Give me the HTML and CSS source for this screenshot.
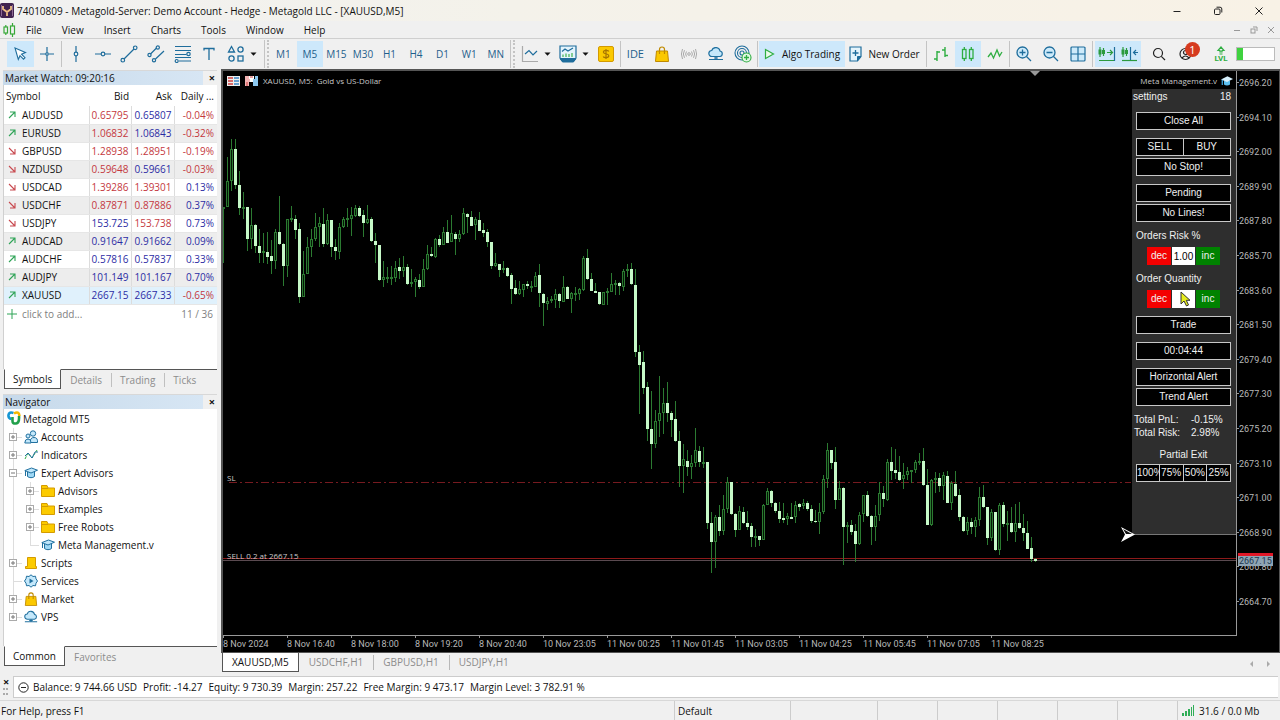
FILE: index.html
```html
<!DOCTYPE html>
<html lang="en">
<head>
<meta charset="utf-8">
<title>74010809 - Metagold-Server: Demo Account - Hedge - Metagold LLC - [XAUUSD,M5]</title>
<link rel="stylesheet" href="styles.css">
</head>
<body>
<svg class="sprite" aria-hidden="true">
  <symbol id="i-cap" viewBox="0 0 14 12"><path d="M3.5 5v4.5c2 1.6 5 1.6 7 0V5" fill="#9fd8f5" stroke="#20709f"/><path d="M.8 3.6 7.5 1l6 2.2L7 6z" fill="#bfe6fb" stroke="#20709f"/><path d="M1.5 4v5" stroke="#20709f"/></symbol>
  <symbol id="i-bag" viewBox="0 0 14 16"><path d="M1.5 5h11l1 10.5H.5z" fill="#fbc800" stroke="#c08a00"/><path d="M4.5 8V3.5a2.5 2.5 0 0 1 5 0V8" fill="none" stroke="#c08a00" stroke-width="1.2"/></symbol>
  <symbol id="i-cloud" viewBox="0 0 16 14"><path d="M4 9.5a3 3 0 0 1-.3-6A4.3 4.3 0 0 1 12 4a2.8 2.8 0 0 1 0 5.5z" fill="#c4e8fb" stroke="#20709f" stroke-width="1.2"/><path d="M8 9.5v3M1 12.5h14M6 11h4" stroke="#20709f" stroke-width="1.2" fill="none"/></symbol>
  <symbol id="i-folder" viewBox="0 0 14 12"><path d="M.5 11.5V.5H6l1 2.5h6.5v8.5z" fill="#fccb00" stroke="#d49b00"/><path d="M1 3.5h6" stroke="#d49b00"/></symbol>
  <symbol id="i-up" viewBox="0 0 8 8"><path d="M1 7 6.5 1.5M2 1h5v5" fill="none" stroke="#2fa457" stroke-width="1.1"/></symbol>
  <symbol id="i-down" viewBox="0 0 8 8"><path d="M1 1l5.5 5.5M7 2v5H2" fill="none" stroke="#c8484e" stroke-width="1.1"/></symbol>
  <symbol id="i-plus" viewBox="0 0 9 9"><rect x=".5" y=".5" width="7" height="7" fill="#fff" stroke="#aaa"/><path d="M2 4h4M4 2v4" stroke="#777"/></symbol>
  <symbol id="i-minus" viewBox="0 0 9 9"><rect x=".5" y=".5" width="7" height="7" fill="#fff" stroke="#aaa"/><path d="M2 4h4" stroke="#777"/></symbol>
  <symbol id="i-caret" viewBox="0 0 7 4"><path d="M.5.5h6L3.5 3.8z" fill="#111"/></symbol>
</svg>

<header class="titlebar">
  <svg class="applogo" width="14" height="15" viewBox="0 0 14 15"><rect width="14" height="15" rx="2" fill="#40234f"/><path d="M3 3v3l4 3 4-3V3M7 9v4" fill="none" stroke="#eebf85" stroke-width="1.8"/><path d="M1.5 2v11M12.5 2v11" stroke="#8c6a94"/></svg>
  <h1>74010809 - Metagold-Server: Demo Account - Hedge - Metagold LLC - [XAUUSD,M5]</h1>
  <div class="winbtns">
    <button aria-label="Minimize"><svg width="10" height="10"><path d="M1.5 5.5h7" stroke="#222"/></svg></button>
    <button aria-label="Restore"><svg width="10" height="10" fill="none" stroke="#222"><rect x="1.5" y="3" width="5.5" height="5.5" rx="1"/><path d="M3.5 1.2h3.5q1.8 0 1.8 1.8v3.5"/></svg></button>
    <button aria-label="Close"><svg width="10" height="10" stroke="#222"><path d="M1.5 1.5l7 7M8.5 1.5l-7 7"/></svg></button>
  </div>
</header>

<nav class="menubar">
  <svg class="menulogo" width="13" height="14" viewBox="0 0 13 14" fill="none" stroke="#38a838" stroke-width="1.2"><rect x="1" y="4" width="3.5" height="6"/><path d="M2.8 2v2M2.8 10v2"/><rect x="7.5" y="3" width="4" height="8"/><path d="M9.5 0v3M9.5 11v3"/></svg>
  <button>File</button><button>View</button><button>Insert</button><button>Charts</button><button>Tools</button><button>Window</button><button>Help</button>
  <div class="childbtns">
    <button aria-label="Minimize chart"><svg width="8" height="8"><path d="M1 4.5h6" stroke="#999"/></svg></button>
    <button aria-label="Restore chart"><svg width="8" height="8" fill="none" stroke="#999"><rect x="1" y="3" width="4" height="4"/><path d="M3 1h4v4"/></svg></button>
    <button aria-label="Close chart"><svg width="8" height="8" stroke="#999"><path d="M1 1l6 6M7 1 1 7"/></svg></button>
  </div>
</nav>

<div class="toolbar">
  <div class="group two">
    <button class="on" aria-label="Cursor"><svg width="16" height="16" viewBox="0 0 16 16"><path d="M3 2l10.5 4.5-4 1.7 3.5 3.5-1.5 1.5L8 9.7 6.3 13.5z" fill="#fff" stroke="#1f6d9c" stroke-width="1.1"/></svg></button>
    <button aria-label="Crosshair"><svg width="16" height="16" viewBox="0 0 16 16" fill="none" stroke="#1f6d9c" stroke-width="1.2"><path d="M8 1v5M8 10v5M1 8h5M10 8h5"/><circle cx="8" cy="8" r="1.3"/></svg></button>
  </div>
  <i class="sep"></i>
  <div class="group seven">
    <button aria-label="Vertical line"><svg width="16" height="18" viewBox="0 0 16 18" fill="none" stroke="#1f6d9c" stroke-width="1.2"><path d="M8 1v6M8 11v6"/><circle cx="8" cy="9" r="1.8"/></svg></button>
    <button aria-label="Horizontal line"><svg width="18" height="16" viewBox="0 0 18 16" fill="none" stroke="#1f6d9c" stroke-width="1.2"><path d="M1 8h6M11 8h6"/><circle cx="9" cy="8" r="1.8"/></svg></button>
    <button aria-label="Trend line"><svg width="18" height="18" viewBox="0 0 18 18" fill="none" stroke="#1f6d9c" stroke-width="1.2"><path d="M4 14 14 4"/><circle cx="2.8" cy="15.2" r="1.8"/><circle cx="15.2" cy="2.8" r="1.8"/></svg></button>
    <button aria-label="Channel"><svg width="18" height="18" viewBox="0 0 18 18" fill="none" stroke="#1f6d9c" stroke-width="1.2"><path d="M3.5 9 9.5 3M8.5 14 17 6"/><circle cx="2.5" cy="10" r="1.6"/><circle cx="10.8" cy="2.5" r="1.6"/><circle cx="7" cy="15.2" r="1.6"/></svg></button>
    <button aria-label="Fibonacci"><svg width="18" height="18" viewBox="0 0 18 18" fill="none" stroke="#1f6d9c" stroke-width="1.2"><path d="M1 1.5h16M1 5.5h16M1 9.5h11.5M1 12.5h16M5 16h12"/><circle cx="14.5" cy="9" r="1.7"/><circle cx="2.7" cy="16" r="1.5"/></svg></button>
    <button aria-label="Text"><svg width="16" height="16" viewBox="0 0 16 16" fill="none" stroke="#1f6d9c" stroke-width="1.3"><path d="M3 4.5V2.5h10v2M8 2.5V14"/></svg></button>
    <button aria-label="Shapes"><svg width="18" height="18" viewBox="0 0 18 18" fill="none" stroke="#1f6d9c" stroke-width="1.3"><path d="M4.5 1.5 7.5 7h-6z"/><circle cx="13.5" cy="4.5" r="2.6"/><circle cx="4.5" cy="13.5" r="2.6"/><rect x="11" y="11" width="5" height="5"/></svg></button>
  </div>
  <button class="caret" aria-label="More shapes"><svg width="7" height="4"><use href="#i-caret"/></svg></button>
  <i class="grip"></i>
  <div class="group frames">
    <button>M1</button><button class="on">M5</button><button>M15</button><button>M30</button><button>H1</button><button>H4</button><button>D1</button><button>W1</button><button>MN</button>
  </div>
  <i class="grip"></i>
  <button class="tool" aria-label="Chart type"><svg width="18" height="18" viewBox="0 0 18 18" fill="none" stroke="#1f6d9c" stroke-width="1.2"><path d="M1.5 1v15.5H17" stroke="#aaa"/><path d="M4 9l4-3.5 4 4.5 4-4"/></svg></button>
  <button class="caret" aria-label="Chart types"><svg width="7" height="4"><use href="#i-caret"/></svg></button>
  <button class="tool" aria-label="Indicators"><svg width="18" height="18" viewBox="0 0 18 18" fill="none" stroke="#1f6d9c" stroke-width="1.2"><path d="M1 1h16v12l-3 4H4l-3-4z" fill="#e4f4fc"/><path d="M1 13.5h16M3 6.5 6 4l3 2 5-3"/><path d="M4 12V9.500M7 12V8.500M10 12V9M13 12V8" stroke="#41b24e"/><path d="M2 14.500h14l-1.500 2h-11z" fill="#1f6d9c"/></svg></button>
  <button class="caret" aria-label="Indicator list"><svg width="7" height="4"><use href="#i-caret"/></svg></button>
  <button class="tool" aria-label="Trade on chart"><svg width="16" height="16" viewBox="0 0 16 16"><rect x=".5" y=".5" width="15" height="15" rx="1.5" fill="#fbc900" stroke="#d39a00"/><path d="M10.8 5.5C10 4 5.4 4 5.4 6.200s5.400 1.300 5.400 3.600S6 12.200 5.200 10.500M8 3v10" fill="none" stroke="#a97600" stroke-width="1.2"/></svg></button>
  <i class="sep"></i>
  <div class="group five">
    <button class="ide">IDE</button>
    <button aria-label="Market"><svg width="14" height="16"><use href="#i-bag"/></svg></button>
    <button aria-label="Signals"><svg width="16" height="12" viewBox="0 0 16 12" fill="none" stroke="#aaa"><circle cx="8" cy="6" r="1.3"/><path d="M5.500 3.500q-1.800 2.500 0 5M10.500 3.500q1.800 2.500 0 5M3.500 2.200q-2.300 3.800 0 7.600M12.500 2.200q2.300 3.800 0 7.600M1.500 1q-2.200 5 0 10M14.500 1q2.200 5 0 10"/></svg></button>
    <button aria-label="VPS"><svg width="16" height="14"><use href="#i-cloud"/></svg></button>
    <button aria-label="Add server"><svg width="18" height="18" viewBox="0 0 18 18" fill="none" stroke="#1f6d9c" stroke-width="1.1"><circle cx="8" cy="8" r="7"/><circle cx="8" cy="8" r="4.5"/><circle cx="8" cy="8" r="2"/><circle cx="12.5" cy="12.5" r="4.5" fill="#e2f7e4" stroke="#2fae42"/><path d="M12.5 10v5M10 12.5h5" stroke="#2fae42" stroke-width="1.3"/></svg></button>
  </div>
  <i class="sep"></i>
  <button class="wide on"><svg width="11" height="12" viewBox="0 0 11 12"><path d="M1.5 1.5 9.5 6l-8 4.5z" fill="#e9fbe9" stroke="#2fae42" stroke-width="1.2"/></svg>Algo Trading</button>
  <button class="wide order"><svg width="14" height="16" viewBox="0 0 14 16"><path d="M1 1h11v9.5L8.5 15H1z" fill="#e4f4fc" stroke="#1f6d9c" stroke-width="1.2"/><path d="M12 10.5H8.5V15" fill="#1f6d9c" stroke="#1f6d9c"/><path d="M6.5 4v6M3.5 7h6" stroke="#1f6d9c" stroke-width="1.3"/></svg>New Order</button>
  <i class="sep"></i>
  <div class="group three">
    <button aria-label="Bars"><svg width="16" height="16" viewBox="0 0 16 16" fill="none" stroke="#2fae42" stroke-width="1.4"><path d="M4 5v10M1 13h3M4 6h3M12 1v10M9 4h3M12 9.5h3"/></svg></button>
    <button class="on" aria-label="Candles"><svg width="14" height="16" viewBox="0 0 14 16" fill="none" stroke="#2fae42" stroke-width="1.3"><rect x="1.5" y="3.5" width="3.5" height="9"/><path d="M3.3 1v2.5M3.3 12.5V15M10.3 1v2.5M10.3 12.5V15"/><rect x="8.5" y="3.5" width="3.5" height="9"/></svg></button>
    <button aria-label="Line"><svg width="16" height="12" viewBox="0 0 16 12" fill="none" stroke="#2fae42" stroke-width="1.3"><path d="M1 9l3-4 2.5 5L10 2l2.5 6L15 4"/></svg></button>
  </div>
  <i class="sep"></i>
  <div class="group three">
    <button aria-label="Zoom in"><svg width="16" height="16" viewBox="0 0 16 16" fill="none" stroke="#1f6d9c" stroke-width="1.3"><circle cx="6.5" cy="6.5" r="5.5" fill="#cdeafa"/><path d="M10.5 10.5 15 15M3.5 6.5h6M6.5 3.5v6"/></svg></button>
    <button aria-label="Zoom out"><svg width="16" height="16" viewBox="0 0 16 16" fill="none" stroke="#1f6d9c" stroke-width="1.3"><circle cx="6.5" cy="6.5" r="5.5" fill="#cdeafa"/><path d="M10.5 10.5 15 15M3.5 6.5h6"/></svg></button>
    <button aria-label="Tile windows"><svg width="16" height="16" viewBox="0 0 16 16" fill="#cdeafa" stroke="#1f6d9c" stroke-width="1.2"><rect x="1" y="1" width="14" height="14" rx="1"/><path d="M8 1v14M1 8h14"/></svg></button>
  </div>
  <i class="sep"></i>
  <div class="group shifts">
    <button class="on" aria-label="Auto scroll"><svg width="18" height="16" viewBox="0 0 18 16" fill="none" stroke="#2b9a3e" stroke-width="1.2"><path d="M2 1v10M5.5 2v8"/><path d="M2 3.5v5M5.5 4v4" stroke-width="3"/><path d="M9 6.5h5M12 4l2.5 2.5L12 9M1 14.5h15"/><path d="M16.5 1v14" stroke="#1f6d9c"/></svg></button>
    <button class="on" aria-label="Chart shift"><svg width="18" height="16" viewBox="0 0 18 16" fill="none" stroke="#2b9a3e" stroke-width="1.2"><path d="M2 1v10M5.5 2v8"/><path d="M2 3.5v5M5.5 4v4" stroke-width="3"/><path d="M1 14.5h15"/><path d="M9.5 1v13M17 6.5h-4M15 4l-2.5 2.5L15 9" stroke="#1f6d9c"/></svg></button>
  </div>
  <button class="tool find" aria-label="Search"><svg width="14" height="14" viewBox="0 0 14 14" fill="none" stroke="#222" stroke-width="1.2"><circle cx="6" cy="6" r="4.5"/><path d="M9.3 9.3 13 13"/></svg></button>
  <button class="tool account" aria-label="Account"><svg width="14" height="14" viewBox="0 0 14 14" fill="none" stroke="#222" stroke-width="1.2"><circle cx="6.5" cy="7" r="5.5"/><circle cx="6.5" cy="5.5" r="2"/><path d="M3 11q3.5-4 7 0"/></svg><span class="badge">1</span></button>
  <div class="level"><svg width="12" height="9" viewBox="0 0 12 9" fill="none" stroke="#2fae42" stroke-width="1.2"><path d="M3 4.5 6 1l3 3.5H7v1.5H5V4.5zM4.5 8h3"/></svg><span>LVL</span></div>
  <div class="battery"></div>
</div>

<main class="main">
  <aside class="side">
    <section class="panel watch">
      <header class="phead"><h2>Market Watch: 09:20:16</h2><button aria-label="Close Market Watch">×</button></header>
      <div class="pbody">
      <table>
        <colgroup><col class="c-sym"><col class="c-bid"><col class="c-ask"><col class="c-day"></colgroup>
        <thead><tr><th>Symbol</th><th>Bid</th><th>Ask</th><th>Daily ...</th></tr></thead>
        <tbody>
        <tr><td><svg><use href="#i-up"/></svg>AUDUSD</td><td class="r">0.65795</td><td>0.65807</td><td class="r">-0.04%</td></tr>
        <tr><td><svg><use href="#i-up"/></svg>EURUSD</td><td class="r">1.06832</td><td>1.06843</td><td class="r">-0.32%</td></tr>
        <tr><td><svg><use href="#i-down"/></svg>GBPUSD</td><td class="r">1.28938</td><td class="r">1.28951</td><td class="r">-0.19%</td></tr>
        <tr><td><svg><use href="#i-down"/></svg>NZDUSD</td><td class="r">0.59648</td><td>0.59661</td><td class="r">-0.03%</td></tr>
        <tr><td><svg><use href="#i-down"/></svg>USDCAD</td><td class="r">1.39286</td><td class="r">1.39301</td><td>0.13%</td></tr>
        <tr><td><svg><use href="#i-down"/></svg>USDCHF</td><td class="r">0.87871</td><td class="r">0.87886</td><td>0.37%</td></tr>
        <tr><td><svg><use href="#i-down"/></svg>USDJPY</td><td>153.725</td><td class="r">153.738</td><td>0.73%</td></tr>
        <tr><td><svg><use href="#i-up"/></svg>AUDCAD</td><td>0.91647</td><td>0.91662</td><td>0.09%</td></tr>
        <tr><td><svg><use href="#i-up"/></svg>AUDCHF</td><td>0.57816</td><td>0.57837</td><td>0.33%</td></tr>
        <tr><td><svg><use href="#i-up"/></svg>AUDJPY</td><td>101.149</td><td>101.167</td><td>0.70%</td></tr>
        <tr class="sel"><td><svg><use href="#i-up"/></svg>XAUUSD</td><td>2667.15</td><td>2667.33</td><td class="r">-0.65%</td></tr>
        </tbody>
      </table>
      <div class="addrow"><svg width="10" height="10"><path d="M5 0v10M0 5h10" stroke="#2fa457"/></svg><span>click to add...</span><span class="count">11 / 36</span></div>
      </div>
      <div class="ptabs"><button class="cur">Symbols</button><button>Details</button><button>Trading</button><button>Ticks</button></div>
    </section>

    <section class="panel nav">
      <header class="phead"><h2>Navigator</h2><button aria-label="Close Navigator">×</button></header>
      <div class="pbody">
      <ul class="tree">
        <li class="root"><svg width="14" height="14" viewBox="0 0 14 14" fill="none" stroke-width="2.6"><path d="M6.5 2Q2 .5 1.5 4t3 4" stroke="#1797d4"/><path d="M7 2.5q5-3 5.5 2.5" stroke="#f5b800"/><path d="M12 5q.5 7-3 7.5T5.5 10V6" stroke="#22a04b"/></svg>Metagold MT5</li>
        <li><svg class="tg"><use href="#i-plus"/></svg><svg class="ic" viewBox="0 0 14 14" fill="#c4e8fb" stroke="#20709f"><circle cx="9" cy="3.5" r="2.7"/><path d="M6 12.5q0-5 4-5t3.5 5z"/><circle cx="4" cy="6" r="2"/><path d="M.8 13q0-4 3.2-4t3 4z"/></svg>Accounts</li>
        <li><svg class="tg"><use href="#i-plus"/></svg><svg class="ic" viewBox="0 0 14 14" fill="none"><path d="M1 11l3-6 4 5 5-8" stroke="#2fae42" stroke-dasharray="3 1"/><path d="M1 8l3-3 4 5 3-6h3" stroke="#20709f"/></svg>Indicators</li>
        <li><svg class="tg"><use href="#i-minus"/></svg><svg class="ic"><use href="#i-cap"/></svg>Expert Advisors
          <ul>
            <li><svg class="tg"><use href="#i-plus"/></svg><svg class="ic"><use href="#i-folder"/></svg>Advisors</li>
            <li><svg class="tg"><use href="#i-plus"/></svg><svg class="ic"><use href="#i-folder"/></svg>Examples</li>
            <li><svg class="tg"><use href="#i-plus"/></svg><svg class="ic"><use href="#i-folder"/></svg>Free Robots</li>
            <li><svg class="tg"></svg><svg class="ic"><use href="#i-cap"/></svg>Meta Management.v</li>
          </ul></li>
        <li><svg class="tg"><use href="#i-plus"/></svg><svg class="ic" viewBox="0 0 14 14" fill="#fccb00" stroke="#d49b00"><path d="M3.5 1.5h8v9h1v2h-11v-2h2z"/></svg>Scripts</li>
        <li><svg class="tg"></svg><svg class="ic" viewBox="0 0 14 14" fill="#c4e8fb" stroke="#20709f"><path d="M7 .8 9 2.5l2.5-.3.5 2.6L13.500 7 12 9.200l-.5 2.600-2.500-.3L7 13.200 5 11.500l-2.500.3L2 9.200.5 7 2 4.800l.5-2.600L5 2.500z"/><path d="M5.500 4.500 9.500 7l-4 2.500z" fill="#20709f" stroke="none"/></svg>Services</li>
        <li><svg class="tg"><use href="#i-plus"/></svg><svg class="ic"><use href="#i-bag"/></svg>Market</li>
        <li><svg class="tg"><use href="#i-plus"/></svg><svg class="ic"><use href="#i-cloud"/></svg>VPS</li>
      </ul>
      </div>
      <div class="ptabs"><button class="cur">Common</button><button>Favorites</button></div>
    </section>
  </aside>

  <section class="chartcol">
    <div class="chart">
      <div class="plotcol">
        <div class="plot">
          <svg class="candles" id="candles" viewBox="223 71 1013 564" preserveAspectRatio="none">
            <path d="M223 558.5h1013" stroke="#8c1a1a"/>
            <path d="M223 560.5h1013" stroke="#5a4a50"/>
            <path d="M229 482.5h902" stroke="#761a20" stroke-dasharray="8 3 2 3"/>
          </svg>
          <div class="ctitle">
            <svg width="13" height="10" viewBox="0 0 13 10"><rect width="13" height="10" fill="#eee"/><path d="M1 2h5M1 5h5M1 8h5" stroke="#d04040" stroke-width="1.5"/><path d="M7 2h5M7 5h5M7 8h5" stroke="#3a86c8" stroke-width="1.5"/></svg>
            <svg width="13" height="10" viewBox="0 0 13 10"><path d="M0 0h5v6H4v4H0z" fill="#f3b4b4"/><path d="M8 3h2V0h3v10H8z" fill="#8cc8f0"/><path d="M4 0h5v3H8v3H5V3H4z" fill="#fff"/><path d="M5 1h3M2 6v4" stroke="#d04040"/></svg>
            <span>XAUUSD, M5:&nbsp; Gold vs US-Dollar</span>
          </div>
          <svg class="shiftmark" width="10" height="6"><path d="M0 0h10L5 5z" fill="#999"/></svg>
          <span class="olabel sl">SL</span>
          <span class="olabel sell">SELL 0.2 at 2667.15</span>
          <div class="eaname">Meta Management.v<svg width="12" height="11" viewBox="0 0 14 12"><path d="M3.5 5v4.5c2 1.6 5 1.6 7 0V5" fill="#5cc0f0"/><path d="M0 3.6 7.5 0 14 3.2 7 6.5z" fill="#d8f1fd"/><path d="M1.5 4v6" stroke="#3aa0dc" stroke-width="1.5"/></svg></div>
          <form class="ea">
            <div class="eahead"><span>settings</span><span>18</span></div>
            <button type="button">Close All</button>
            <div class="split gap"><button type="button">SELL</button><button type="button">BUY</button></div>
            <button type="button" class="tight">No Stop!</button>
            <button type="button" class="gap">Pending</button>
            <button type="button" class="tight">No Lines!</button>
            <label for="risk">Orders Risk %</label>
            <div class="spin"><button type="button" class="dec">dec</button><input id="risk" value="1.00"><button type="button" class="inc">inc</button></div>
            <label for="qty">Order Quantity</label>
            <div class="spin"><button type="button" class="dec">dec</button><input id="qty" value=""><button type="button" class="inc">inc</button>
              <svg class="pointer" width="11" height="16" viewBox="0 0 11 16"><path d="M1 1v12l3-3 2.5 5 2-1L6.3 9.3H10z" fill="#e6ec1e" stroke="#333"/></svg></div>
            <button type="button" class="gap">Trade</button>
            <button type="button" class="gap">00:04:44</button>
            <button type="button" class="gap">Horizontal Alert</button>
            <button type="button" class="tight">Trend Alert</button>
            <dl><dt>Total PnL:</dt><dd>-0.15%</dd><dt>Total Risk:</dt><dd>2.98%</dd></dl>
            <div class="exit">Partial Exit</div>
            <div class="split tight"><button type="button">100%</button><button type="button">75%</button><button type="button">50%</button><button type="button">25%</button></div>
            <svg class="arrow" width="14" height="15" viewBox="0 0 14 15"><path d="M0 0l14 7.5L0 15l4-7.5z" fill="#fff"/><path d="M2 2l9 5H5z" fill="#111"/></svg>
          </form>
        </div>
        <div class="times"><span>8 Nov 2024</span><span>8 Nov 16:40</span><span>8 Nov 18:00</span><span>8 Nov 19:20</span><span>8 Nov 20:40</span><span>10 Nov 23:05</span><span>11 Nov 00:25</span><span>11 Nov 01:45</span><span>11 Nov 03:05</span><span>11 Nov 04:25</span><span>11 Nov 05:45</span><span>11 Nov 07:05</span><span>11 Nov 08:25</span></div>
      </div>
      <div class="prices"><span>2696.20</span><span>2694.10</span><span>2692.00</span><span>2689.90</span><span>2687.80</span><span>2685.70</span><span>2683.60</span><span>2681.50</span><span>2679.40</span><span>2677.30</span><span>2675.20</span><span>2673.10</span><span>2671.00</span><span>2668.90</span><span>2666.80</span><span>2664.70</span><b>2667.15</b></div>
    </div>
    <div class="ctabs"><button class="cur">XAUUSD,M5</button><button>USDCHF,H1</button><button>GBPUSD,H1</button><button>USDJPY,H1</button>
      <div class="scroll"><button aria-label="Previous tab"><svg width="5" height="8"><path d="M4 1 1 4l3 3z" fill="#aaa"/></svg></button><button aria-label="Next tab"><svg width="5" height="8"><path d="M1 1l3 3-3 3z" fill="#aaa"/></svg></button></div>
    </div>
  </section>
</main>

<section class="terminal">
  <div class="tgrip"><button aria-label="Close terminal">×</button><i></i></div>
  <div class="balance"><svg width="11" height="11" fill="none" stroke="#222"><circle cx="5.5" cy="5.5" r="4.7"/><path d="M3 5.5h5"/></svg><span>Balance: 9 744.66 USD</span><span>Profit: -14.27</span><span>Equity: 9 730.39</span><span>Margin: 257.22</span><span>Free Margin: 9 473.17</span><span>Margin Level: 3 782.91 %</span></div>
</section>

<footer class="status">
  <span class="help">For Help, press F1</span><span class="profile">Default</span><span class="s87"></span><span></span><span></span><span></span><span></span><span></span>
  <span class="net"><svg width="13" height="11" fill="#2fae57"><rect x="0" y="8" width="2" height="3"/><rect x="3" y="6" width="2" height="5"/><rect x="6" y="4" width="2" height="7"/><rect x="9" y="2" width="1" height="9"/><rect x="11" y="0" width="1" height="11"/></svg>31.6 / 0.0 Mb</span>
</footer>
<script src="chart.js"></script>
</body>
</html>
```

FILE: styles.css
```css
* { box-sizing: border-box; }
body {
  margin: 0;
  height: 100vh;
  display: flex;
  flex-direction: column;
  overflow: hidden;
  background: #f0f0f0;
  color: #111;
  font: 10px/16px "Open Sans", "Noto Sans", sans-serif;
}
button {
  font: inherit;
  color: inherit;
  background: none;
  border: 0;
  padding: 0;
  margin: 0;
  white-space: nowrap;
}
h1, h2 { margin: 0; font-size: inherit; font-weight: 400; }
svg { display: block; flex: none; }
.sprite { position: absolute; width: 0; height: 0; }

.titlebar {
  flex: none;
  height: 21px;
  display: flex;
  align-items: center;
  background: linear-gradient(90deg, #f1f1f1, #f4f2ea 40%, #f8f2e6);
}
.applogo { margin-right: 3px; }
.winbtns { margin-left: auto; display: flex; gap: 31px; padding-right: 16px; }

.menubar { flex: none; height: 17px; display: flex; align-items: center; padding-left: 3px; }
.menulogo { margin-right: 10px; }
.menubar > button { margin-right: 20px; }
.childbtns { margin-left: auto; display: flex; gap: 9px; padding-right: 5px; }

.toolbar {
  flex: none;
  height: 31px;
  display: flex;
  align-items: center;
  padding: 0 5px 0 7px;
  border-top: 1px solid #cfcfcf;
  color: #1f5f8c;
}
.toolbar button { height: 26px; display: flex; align-items: center; justify-content: center; }
.toolbar .on { background: #cde8fb; }
.group { flex: none; display: grid; grid-auto-flow: column; grid-auto-columns: minmax(0, 1fr); }
.two { width: 53px; }
.seven { width: 186px; }
.frames { width: 239px; }
.five { width: 134px; }
.three { width: 80px; }
.shifts { width: 46px; margin-left: 1px; overflow: hidden; }
.sep { flex: none; width: 1px; height: 26px; margin: 0 1px; background: #c4c4c4; }
.grip { flex: none; width: 5px; height: 28px; margin: 0 1px; border-left: 1px solid #c4c4c4; border-right: 2px dotted #c4c4c4; }
.caret { flex: none; width: 8px; }
.caret + .grip { margin-left: 7px; }
.tool { flex: none; width: 27px; }
.caret + .tool { margin-left: 3px; }
.toolbar .ide { font-size: 11px; }
.toolbar .wide { flex: none; width: 86px; gap: 7px; color: #111; }
.toolbar .order { width: 75px; gap: 5px; margin: 0 3px 0 2px; }
.find { margin-left: 4px; }
.account { position: relative; }
.badge {
  position: absolute;
  left: 13px;
  top: 1px;
  width: 15px;
  height: 15px;
  border-radius: 50%;
  background: #d63b1f;
  color: #fff;
  font-size: 11px;
  line-height: 15px;
}
.level { margin-left: auto; width: 24px; color: #2fae42; text-align: center; font: 700 8px/8px Roboto, sans-serif; }
.level svg { margin: 0 auto; }
.battery {
  flex: none;
  width: 39px;
  height: 14px;
  margin-left: 3px;
  border: 1px solid #bbb;
  background: linear-gradient(90deg, #3fd23f 6px, #fff 6px);
}

.main { flex: 1; min-height: 0; display: flex; }
.side { flex: none; width: 221px; padding: 1px 4px 9px 3px; display: flex; flex-direction: column; }
.panel { display: flex; flex-direction: column; }
.watch { height: 319px; margin-bottom: 5px; border-top: 1px solid #d8d8d8; }
.nav { flex: 1; min-height: 0; border-top: 1px solid #d8d8d8; }
.phead { flex: none; height: 14px; display: flex; align-items: center; line-height: 14px; padding-left: 2px; background: linear-gradient(90deg, #c6d9ea, #d7e6f4 200px, #f0f0f0 200px); }
.phead button { margin-left: auto; width: 10px; color: #111; font-size: 11px; font-weight: 700; line-height: 12px; }
.pbody { flex: 1; min-height: 0; background: #fff; border-left: 1px solid #d0d0d0; }

table { width: 100%; border-collapse: collapse; table-layout: fixed; }
.c-bid { width: 42px; }
.c-ask { width: 43px; }
.c-day { width: 43px; }
th { height: 21px; padding: 0 2px; font-weight: 400; text-align: right; white-space: nowrap; }
th:first-child, td:first-child { text-align: left; color: #111; }
td { height: 18px; padding: 0 2px 0 0; text-align: right; color: #2c2ca4; border-right: 1px solid #dcdcdc; border-bottom: 1px solid #e6e6e6; line-height: 16px; }
td:last-child, th:last-child { padding-right: 3px; }
td:last-child { border-right: 0; }
td svg { float: left; width: 8px; height: 8px; margin: 4px 6px 0 4px; }
td.r { color: #c4383e; }
tbody tr:nth-child(even) { background: #ededed; }
tbody tr.sel { background: #e0f1fc; }
.addrow { height: 18px; display: flex; align-items: center; padding: 0 4px 0 3px; gap: 5px; color: #808080; }
.count { margin-left: auto; }

.ptabs { flex: none; display: flex; height: 20px; line-height: 18px; color: #8c8c8c; }
.ptabs button { padding: 0 9px; border-top: 1px solid #555; }
.ptabs::after { content: ""; flex: 1; border-top: 1px solid #555; }
.ptabs .cur { margin-left: 1px; padding: 0 8px; background: #fff; color: #111; border: 1px solid #555; border-top-color: #fff; }
.ptabs button:not(.cur) + button { background: linear-gradient(#c0c0c0, #c0c0c0) 0 3px / 1px 14px no-repeat; }

.tree, .tree ul { list-style: none; margin: 0; padding: 0; }
.tree { padding-top: 1px; line-height: 18px; }
.tree li { padding-left: 5px; position: relative; }
.tree li.root { padding-left: 3px; }
.tree .root svg { float: left; margin: 1px 2px 0 0; }
.tree ul { margin-left: 12px; clear: left; }
.tree ul li { padding-left: 5px; }
.tg { float: left; width: 9px; height: 9px; margin: 5px 6px 4px 0; position: relative; }
.ic { float: left; width: 14px; height: 14px; margin: 2px 3px 2px 0; }
.tree li:not(.root)::before { content: ""; position: absolute; left: 9px; top: 0; bottom: 0; border-left: 1px solid #ddd; }
.tree li:not(.root)::after { content: ""; position: absolute; left: 9px; top: 9px; width: 9px; border-top: 1px solid #ddd; }
.tree .tg { z-index: 1; }
.tree li:last-child::before { bottom: auto; height: 9px; }

.chartcol { flex: 1; min-width: 0; display: flex; flex-direction: column; }
.chart {
  flex: 1;
  min-height: 0;
  display: flex;
  background: #000;
  border: solid #555;
  border-width: 2px 1px 1px 2px;
  color: #b8b8b8;
  font: 9px/12px Roboto, "Open Sans", sans-serif;
}
.plotcol { flex: 1; min-width: 0; display: flex; flex-direction: column; }
.plot { flex: 1; min-height: 0; position: relative; border: solid #999; border-width: 0 1px 1px 0; }
.candles { position: absolute; inset: 0; width: 100%; height: 100%; }
.wick { fill: #2b7a31; }
.bull { fill: #041a06; stroke: #2b7a31; }
.bear { fill: #c6f9c8; }
.ctitle, .olabel, .eaname { font: 8px/12px "Open Sans", "Noto Sans", sans-serif; color: #c8c8c8; white-space: nowrap; }
.ctitle { position: absolute; left: 4px; top: 4px; display: flex; align-items: center; gap: 5px; }
.shiftmark { position: absolute; left: 80%; top: 0; margin-left: -3px; }
.olabel { position: absolute; left: 4px; }
.sl { top: 401px; }
.sell { top: 479px; }
.eaname { position: absolute; right: 3px; top: 4px; display: flex; align-items: center; gap: 4px; }
.times { flex: none; height: 16px; display: flex; line-height: 16px; overflow: hidden; white-space: nowrap; }
.times span { flex: none; width: 64px; background: linear-gradient(#999, #999) 0 0 / 1px 2px no-repeat; }
.prices { flex: none; position: relative; width: 42px; padding: 6px 0 44px; display: flex; flex-direction: column; justify-content: space-between; }
.prices span::before { content: ""; display: inline-block; width: 2px; height: 1px; background: #999; vertical-align: 3px; }
.prices b {
  position: absolute;
  left: 1px;
  top: 482px;
  width: 35px;
  height: 13px;
  padding-left: 1px;
  border-top: 3px solid #e01828;
  background: #8ea4b4;
  color: #1d3850;
  font-weight: 400;
  line-height: 10px;
}

.ea {
  position: absolute;
  right: 0;
  top: 18px;
  width: 104px;
  height: 446px;
  padding: 0 5px 0 4px;
  display: flex;
  flex-direction: column;
  background: #2e2e2e;
  border-bottom: 1px solid #777;
  color: #f0f0f0;
  font: 10px/16px "Liberation Sans", Arial, sans-serif;
}
.ea > * { flex: none; }
.eahead { display: flex; justify-content: space-between; height: 23px; margin: 0 0 0 -3px; }
.ea button { height: 18px; background: #000; border: 1px solid #c8c8c8; }
.ea .gap { margin-top: 8px; }
.ea .tight { margin-top: 2px; }
.split { display: grid; grid-auto-flow: column; grid-auto-columns: minmax(0, 1fr); }
.split button + button { border-left: 0; }
.ea label { margin: 6px 0 3px; }
.spin { position: relative; display: flex; justify-content: center; gap: 1px; }
.ea .spin button { width: 24px; border: 0; }
.ea .spin .dec { background: #f40000; }
.ea .spin .inc { background: #008200; }
.spin input { width: 23px; height: 18px; padding: 0; border: 0; background: #fff; color: #000; font: inherit; text-align: center; }
.pointer { position: absolute; left: 44px; top: 1px; }
.ea dl { display: grid; grid-template-columns: 57px 1fr; margin: 7px 0 8px -2px; line-height: 13px; }
.ea dd { margin: 0; }
.exit { text-align: center; height: 15px; }
.arrow { position: absolute; left: -11px; bottom: -8px; }

.ctabs { flex: none; height: 22px; display: flex; line-height: 19px; color: #8c8c8c; padding-left: 1px; }
.ctabs > button { height: 19px; padding: 0 10px; }
.ctabs .cur { background: #fff; color: #111; border: 1px solid #555; border-top: 0; padding: 0 9px; }
.ctabs > button:not(.cur) + button { background: linear-gradient(#b8b8b8, #b8b8b8) 0 2px / 1px 15px no-repeat; }
.scroll { margin-left: auto; display: flex; align-items: center; gap: 12px; padding-right: 9px; }

.terminal { flex: none; height: 26px; display: flex; padding: 1px 2px 2px 0; border-bottom: 1px solid #d8d8d8; }
.tgrip { flex: none; width: 13px; padding-left: 3px; }
.tgrip button { display: block; height: 12px; font-size: 11px; line-height: 10px; font-weight: 700; }
.tgrip i { display: block; width: 5px; height: 7px; border-left: 2px dotted #aaa; border-right: 2px dotted #aaa; }
.balance { flex: 1; display: flex; align-items: center; gap: 6px; padding-left: 4px; background: #fff; border: 1px solid #ccc; border-right: 0; }
.balance svg { margin-right: -2px; }

.status { flex: none; height: 19px; display: flex; line-height: 20px; }
.status span { flex: none; width: 60px; border-left: 1px solid #ccc; }
.status .help { flex: 1; border: 0; padding-left: 1px; }
.status .profile { width: 116px; padding-left: 3px; }
.status .s87 { width: 87px; }
.status .net { width: 103px; display: flex; align-items: center; gap: 4px; padding-left: 4px; }
```

FILE: chart.js
```js
// Candles in screen order: f = falling (filled), h = rising (hollow);
// then high, body top, body bottom, low, in thirds of a unit above the segment base.
const segments = [
  [70, `h410 410 411 578,h260 332 411 411,h207 238 332 362,f207 236 346 356,f302 346 415 436,h365 410 414 448,f411 411 506 542,h415 465 506 538,f463 465 529 548,f478 529 548 578,h490 543 547 580,f487 545 560 582,f510 558 572 612,h478 487 572 598,f378 487 522 524,f520 521 587 648,h446 448 587 620,h408 445 449 455,f435 448 479 508,f460 478 680 698,h542 613 680 680,h500 530 613 613,h478 507 530 560,h428 470 508 512,h440 460 470 530,f415 461 521 530,h432 450 522 525,f450 450 532 560,f507 532 542 570,h458 472 545 568,h440 447 472 474,h415 443 447 470,h412 436 446 498,h405 414 437 442,f408 414 437 440,f420 434 460 502,h405 447 460 463,f440 447 513 515,f490 513 525 578,f525 526 631 633,h573 622 630 652,h590 621 626 640,h588 622 626 645,h574 594 624 636,f563 592 603 628,h558 590 603 622,f582 590 643 645,h598 636 642 650,h620 628 636 682,f612 630 651 656,h567 598 651 651,h525 552 598 600,f530 552 559 562,h503 507 562 565,f495 507 524 530,h470 486 524 524,f451 487 518 520,h434 490 517 517,f485 491 508 554,h480 492 508 515`],
  [180, `h84 100 163 165,f98 101 111 160,f92 110 137 138,h110 118 136 180,f96 120 152 154,f130 150 160 172,f148 156 187 200,f186 187 258 266,h220 250 259 262,f252 253 269 290,h243 263 268 278,f262 264 288 292,f278 285 326 372,f300 325 342 344,h303 327 342 344,h312 313 331 350,f302 313 317 328,h303 317 321 335,h276 287 320 322,f253 286 338 382,f340 342 370 437,h350 363 371 390,h348 357 364 370,h328 343 360 384,f338 342 364 384,h288 320 365 366,f318 321 356 358,h335 338 356 400,h320 338 342 362,h325 328 341 360,h228 234 330 332,f207 234 298 300,f280 298 332 334,f308 332 338 340,f335 336 372 376,h335 337 374 376,h325 333 338 374,h280 313 335 336,h300 308 312 346,f306 309 318 344,h268 272 320 334,h252 267 272 290,f248 268 313 314,f268 315 515 530`],
  [240, `f315 335 374 522,f332 367 444 462,f425 440 567 604,f452 567 611 688,h510 544 611 624,h407 518 544 590,h443 488 518 582,f427 488 518 545,f512 518 540 592,f482 536 604 606,f572 603 678 740,h613 658 677 760,f630 662 681 708,h645 670 681 716,h565 631 670 680,f618 632 666 682,h620 666 668 684,f667 667 849 866,f815 849 906 1000,h826 832 906 984,f794 832 872 888,h765 808 872 884,h710 727 808 820,f726 727 822 826,f820 822 870 890,h797 814 869 870,f800 815 849 852,f812 849 860 870,f850 858 892 922,h866 887 891 922,f888 889 899 918,h792 794 899 900,h744 752 794 796,f750 753 789 800,f785 788 814 820,f785 813 836 850,f790 834 840 850,h820 828 838 854,f790 830 836 838,h783 794 832 850,f790 792 801 812,h778 788 799 808,f782 788 808 812,f795 808 842 850,f810 842 846 848,h790 816 846 882,h706 718 816 822`],
  [420, `h70 90 178 203,f90 91 128 148,f82 127 240 266,h183 203 239 240,f200 204 320 434,h305 315 321 368,f300 316 336 345,f312 334 371 426,h275 284 373 376,h224 226 283 305,f213 225 289 290,f285 288 321 376,h256 287 320 364,h185 218 286 304,f198 218 237 260,h118 126 240 242,f82 126 152 180,f88 151 158 178,f108 156 179 184,h128 166 178 208,h140 154 166 180,h150 151 155 190,h120 125 151 160,h98 122 126 135,f85 122 195 198,f148 194 315 316,h178 181 316 318,h155 173 180 218,f160 175 197 215,h157 166 198 240,f152 168 248 250,h182 190 248 270,f152 192 227 232,f208 225 290 304,f288 290 333 336,h292 305 332 345,f295 305 322 342,h290 301 322 352,h200 232 301 318,f195 231 261 264,f260 262 353 374,h268 277 353 362,f276 277 389 394,h250 255 389 404,f246 255 312 320,h273 310 314 364,f262 310 336 340,h253 308 336 366,f245 308 324 326,f282 324 339 364,f303 339 386 388,f352 385 418 426,f415 418 423 426`]
];
const svg = document.getElementById("candles");
const rect = (cls, x, y, w, h) => {
  const r = document.createElementNS("http://www.w3.org/2000/svg", "rect");
  r.setAttribute("class", cls);
  Object.entries({ x, y, width: w, height: h }).forEach(([k, v]) => r.setAttribute(k, v));
  svg.appendChild(r);
};
let x = 223;
for (const [base, rows] of segments) {
  for (const row of rows.split(",")) {
    const [high, top, bottom, low] = row.slice(1).split(" ").map(v => Math.round(base + v / 3));
    rect("wick", x, high, 1, Math.max(1, low - high));
    if (row[0] === "f") rect("bear", x - 1, top, 3, Math.max(1, bottom - top));
    else rect("bull", x - 0.5, top + 0.5, 2, Math.max(1, bottom - top - 1));
    x += 4;
  }
}
```
